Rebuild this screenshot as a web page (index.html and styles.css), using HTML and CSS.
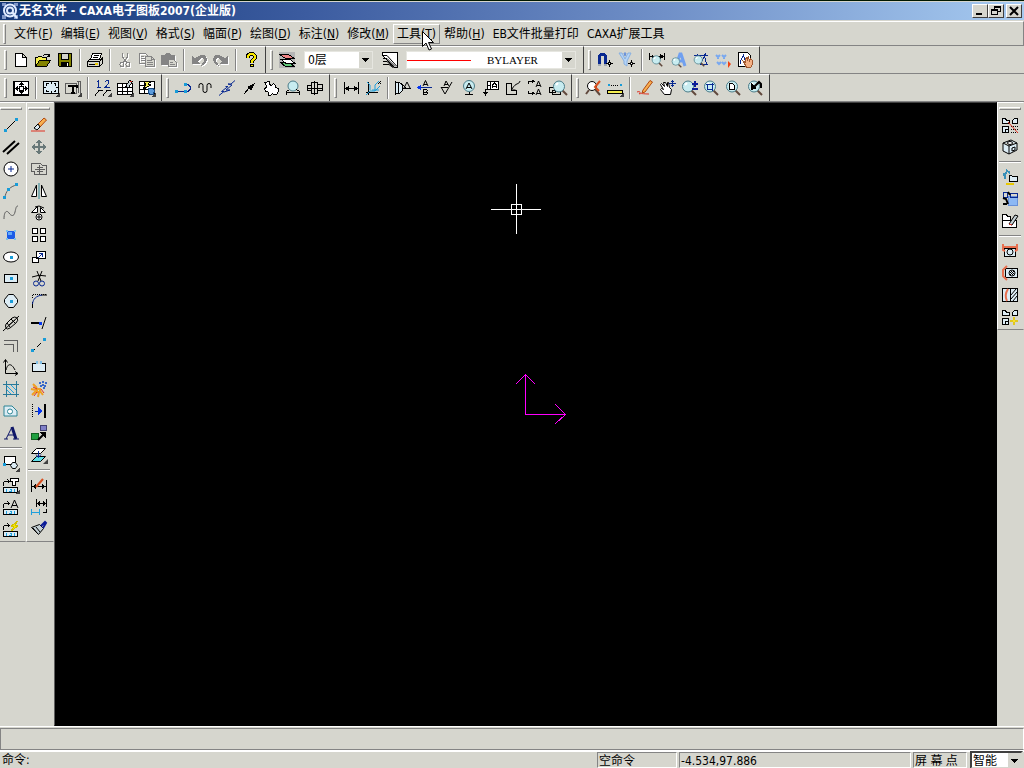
FILE: index.html
```html
<!DOCTYPE html>
<html lang="zh-CN">
<head>
    <meta charset="utf-8">
    <title>无名文件 - CAXA电子图板2007(企业版)</title>
    <link rel="stylesheet" href="styles.css">
</head>
<body>
    <svg class="defs" aria-hidden="true">
        <symbol id="lens" viewBox="0 0 16 16"><path class="handle" d="M10.500 10.500l4.500 4.500"/><circle class="glass" cx="7" cy="6.500" r="5.500"/><path class="shine" d="M4 5l2-2"/></symbol>
        <symbol id="fly" viewBox="0 0 18 18"><path class="flyout" d="M17 12v5h-5z"/></symbol>
        <symbol id="block" viewBox="0 0 16 16"><path d="M.5 4.500h6M4.500 2.500l2 2l-2 2M.5 4.500v4"/><rect class="pale" x=".5" y="10.500" width="14" height="5"/><path class="cyan" d="M3.500 12v3M6.500 12h2v2M11.500 12v3M5.500 14.500h3"/></symbol>
    </svg>

    <header class="titlebar">
        <svg class="logo" viewBox="0 0 16 16"><path class="logo-bg" d="M0 0h4v3H0zM12 0h4v3h-4zM0 12h4v4H0zM12 12h4v4h-4z"/><circle cx="8" cy="7.500" r="6"/><circle cx="8" cy="7.500" r="3"/><path d="M10 9l5 6"/></svg>
        <h1>无名文件 - CAXA电子图板2007(企业版)</h1>
        <div class="window-buttons">
            <button aria-label="最小化"><svg viewBox="0 0 12 10"><path class="thick" d="M2 8h6"/></svg></button>
            <button aria-label="还原"><svg viewBox="0 0 12 10"><path d="M4.500 3V.5h6v5H8M4 1.500h7M1.500 3.500h6v5h-6zM1 4.500h7"/></svg></button>
            <button aria-label="关闭"><svg viewBox="0 0 12 10"><path class="cross" d="M2 1l8 8M10 1l-8 8"/></svg></button>
        </div>
    </header>

    <nav class="menubar">
        <span class="grip"></span>
        <button>文件(<u>F</u>)</button>
        <button>编辑(<u>E</u>)</button>
        <button>视图(<u>V</u>)</button>
        <button>格式(<u>S</u>)</button>
        <button>幅面(<u>P</u>)</button>
        <button>绘图(<u>D</u>)</button>
        <button>标注(<u>N</u>)</button>
        <button>修改(<u>M</u>)</button>
        <button class="hot">工具(<u>T</u>)<svg class="pointer" viewBox="0 0 12 20"><path d="M.5.5v15l3.500-3.500l3 7l2.500-1l-3-6.500h5z"/></svg></button>
        <button>帮助(<u>H</u>)</button>
        <button>EB文件批量打印</button>
        <button>CAXA扩展工具</button>
    </nav>

    <div class="toolrow">
        <div class="toolbar">
            <span class="grip"></span>
            <button aria-label="新建"><svg viewBox="0 0 16 16"><path class="white" d="M2.500 1.500h7l4 4v9h-11zM9.500 1.500v4h4"/></svg></button>
            <button aria-label="打开"><svg viewBox="0 0 16 16"><path class="yellow" d="M.5 14.500v-9h2l1-1h3l1 1h4v3"/><path class="olive" d="M.5 14.500l4-6h11l-4 6z"/><path d="M8.500 3.500l2-1.500h2l2 2M14.500 1.500v3h-3"/></svg></button>
            <button aria-label="保存"><svg viewBox="0 0 16 16"><path class="olive" d="M1.500 1.500h13v13h-12l-1-1z"/><path class="panel" d="M4.500 1.500h7v6h-7z"/><path class="solid" d="M4 10h8v5H4z"/><path class="ink-white" d="M10.500 11v3"/></svg></button>
            <i class="sep"></i>
            <button aria-label="打印"><svg viewBox="0 0 16 16"><path class="white" d="M3.500 7.500l2-6h9l-2 6z"/><path class="panel" d="M.5 9.500l2-2h11l2-2v6l-3 3H.5z"/><path d="M.5 9.500h12v5M12.500 9.500l3-3M6.500 3.500h5M5.500 5.500h5M2 12.500h9M2 14h10"/><path class="yellow-line" d="M8 11.500h3"/></svg></button>
            <i class="sep"></i>
            <button aria-label="剪切"><svg class="off" viewBox="0 0 16 16"><path d="M5.500 1v4l3 4M10.500 1v4l-3 4l-2 2M8.500 9l3 2"/><circle cx="5" cy="12.500" r="2"/><circle cx="11" cy="12.500" r="2"/></svg></button>
            <button aria-label="复制"><svg class="off" viewBox="0 0 16 16"><path d="M.5 1.500h6l2 2v8h-8zM2 4.500h3M2 6.500h4M2 8.500h4"/><path class="panel" d="M6.500 4.500h6l3 3v7h-9z"/><path d="M8 8.500h5M8 10.500h6M8 12.500h6M12.500 4.500v3h3"/></svg></button>
            <button aria-label="粘贴"><svg class="off" viewBox="0 0 16 16"><path class="graybox" d="M.5 3.500h4l1-2h3l1 2h4v9H.5z"/><path class="panel" d="M7.500 7.500h5l3 3v4h-8z"/><path d="M9 10.500h3M9 12.500h5"/></svg></button>
            <i class="sep"></i>
            <button aria-label="撤消"><svg class="off" viewBox="0 0 16 16"><path class="graybox" d="M1.500 4.500v7h7l-2.500-2 4-4h2l1.500 1.500-.5 3-2.500 3.500 4-3 1-4-2-3h-4L4 7z"/></svg></button>
            <button aria-label="重做"><svg class="off" viewBox="0 0 16 16"><path class="graybox" d="M14.500 4.500v7h-7l2.500-2-4-4H4L2.500 7l.5 3 2.500 3.500-4-3-1-4 2-3h4L12 7z"/></svg></button>
            <i class="sep"></i>
            <button aria-label="帮助"><svg viewBox="0 0 16 16"><path class="help-edge" d="M5 6V3.500l2-1.500h3l2 2v2l-3 3v2M8.500 12v3"/><path class="help-fill" d="M5 6V3.500l2-1.500h3l2 2v2l-3 3v2M8.500 13v1"/></svg></button>
        </div>
        <div class="toolbar">
            <span class="grip"></span>
            <button class="pressed" aria-label="层控制"><svg viewBox="0 0 16 16"><path class="green" d="M1.500 10.500h9l5 4h-9z"/><path class="white" d="M1.500 7h9l5 4h-9z"/><path class="pink" d="M.5 2.500h9l6 4h-9z"/></svg></button>
            <label class="combo layer"><select aria-label="图层"><option>0层</option></select><svg class="arrow" viewBox="0 0 13 16"><path d="M3 6h7L6.500 10z"/></svg></label>
            <button aria-label="线型"><svg viewBox="0 0 16 16"><path class="white" d="M.5.500h15v15h-3L.5 3.500z"/><path class="smooth" d="M1 3.500h4l10 11M1 6.500h4l8 8M1 9.500h4l7 6M1 12.500h6l4 3"/></svg></button>
            <label class="combo linetype"><select aria-label="线型选择"><option>BYLAYER</option></select><svg class="sample" viewBox="0 0 64 1"><path d="M0 .5h64"/></svg><svg class="arrow" viewBox="0 0 13 16"><path d="M3 6h7L6.500 10z"/></svg></label>
        </div>
        <div class="toolbar">
            <span class="grip"></span>
            <button aria-label="捕捉设置"><svg viewBox="0 0 16 16"><path class="magnet" d="M2.500 13V4l2-2h2l2 2v9"/><path class="silver" d="M1 13h3M7 13h3"/><path d="M12.500 8v7M9 11.500h7"/><path class="white" d="M11.500 10.500h2v2h-2z"/></svg></button>
            <button aria-label="拾取过滤"><svg class="smooth" viewBox="0 0 16 16"><path class="funnel" d="M0 1h3l3 6 3-6h3L8 9v5l-3-2V9z"/><path class="sky" d="M5 1h2l-1 3z"/><path d="M12.500 8v7M9 11.500h7"/><path class="white" d="M11.500 10.500h2v2h-2z"/></svg></button>
            <i class="sep"></i>
            <button aria-label="查询距离"><svg viewBox="0 0 16 16"><path d="M.5 1v7M15.500 1v7M1 4.500h14"/><path class="solid" d="M15 4.500l-4-3v6zM1 4.500l3-2v4z"/><use href="#lens" x="2" y="3" width="12" height="12"/></svg></button>
            <button aria-label="查询文字"><svg class="smooth" viewBox="0 0 16 16"><path class="letter-sky" d="M6 11L9 2h1l4 12M7 9h6"/><use href="#lens" y="5" width="11" height="11"/></svg></button>
            <button aria-label="查询面积"><svg viewBox="0 0 16 16"><path class="blue" d="M1 3.500h14M4.500 1.500v4M12.500 1.500l-5 11h7M11.500 4l2 8"/><use href="#lens" y="3" width="12" height="12"/></svg></button>
            <button aria-label="查询坐标"><svg class="smooth" viewBox="0 0 16 16"><path class="marks" d="M1 3l2 2 2-2M7 3l2 2 2-2M2 10l2 2 2-2M7 10l2 2 2-2M3 6v1M9 6v1"/><path class="red-solid" d="M13 9l3 3-3 4z"/></svg></button>
            <button aria-label="查询属性"><svg viewBox="0 0 16 16"><path class="white" d="M1.500.500h9l3 3v11h-12z"/><path class="blue" d="M3.500 12V9l3-6 2 7"/><path class="hand" d="M6.500 9.500l2 1v-4l2-1v3l1-3 1 3 1-2 2 2v4l-2 3h-4z"/></svg></button>
        </div>
    </div>

    <div class="toolrow">
        <div class="toolbar">
            <span class="grip"></span>
            <button aria-label="显示全部"><svg viewBox="0 0 16 16"><path class="white" d="M1.500 1.500h14v13h-14z"/><path d="M.5 1v14.500H16M8.500 3v3M8.500 10v3M3 8.500h3M11 8.500h3M6.500 6.500h4v4h-4z"/><path class="solid" d="M8.500 2L11 5H6zM8.500 14l2.500-3H6zM2 8.500L5 6v5zM15 8.500L12 6v5z"/></svg></button>
            <i class="sep"></i>
            <button aria-label="图幅"><svg viewBox="0 0 16 16"><path class="pale" d="M.5 1.500h15v12H.5z"/><path d="M3.500 5.500v-2h2M10.500 3.500h2v2M3.500 9.500v2h2M12.500 9.500v2h-2M8 1v3M8 11v3M0 7.500h3M13 7.500h3"/><use href="#fly" width="18" height="18"/></svg></button>
            <button aria-label="标题栏"><svg viewBox="0 0 16 16"><path class="gray" d="M.5 3.500h11v10H.5zM12 1.500h3.500v12M13.500 1v12"/><path class="heavy" d="M4 7V6h8v2M8 6v7M6 13h4"/><use href="#fly" width="18" height="18"/></svg></button>
            <i class="sep"></i>
            <button aria-label="序号"><svg viewBox="0 0 16 16"><path class="blue" d="M3.500 7V.5L2 2M2 7.500h4M10 2l1.500-1.500h2v3L10 7.500h5"/><path d="M0 15.500l4-5h4M8 15.500l4-5h4"/><use href="#fly" width="18" height="18"/></svg></button>
            <button aria-label="明细表"><svg viewBox="0 0 16 16"><path class="white" d="M.5 3.500h15v11H.5z"/><path d="M.5 7.500h15M.5 11h15M5.500 3.500v11M10.500 3.500v11"/><path class="silver-fill" d="M8.500 6.500l4-6 3 1-4 6z"/><path class="red" d="M13 1l2 1"/><use href="#fly" width="18" height="18"/></svg></button>
            <button aria-label="背景"><svg viewBox="0 0 16 16"><path class="white" d="M.5 1.500h15v12H.5z"/><path d="M.5 5.500h5M.5 9.500h8M5.500 1v12"/><path class="yellow" d="M12 1.500H4.500L7 5l-4 5 9-5-3-1z"/><path class="globe" d="M9.500 8.500h5l1 2-1 4h-4l-1-2z"/><use href="#fly" width="18" height="18"/></svg></button>
        </div>
        <div class="toolbar">
            <span class="grip"></span>
            <button aria-label="轮廓线"><svg viewBox="0 0 16 16"><path class="blue" d="M1 11.500h9M10 4.500h3l2 2v3l-2 2h-3"/><path class="dots" d="M0 10h3v3H0zM9 10h3v3H9zM9 3h3v3H9z"/></svg></button>
            <button aria-label="波浪线"><svg class="smooth" viewBox="0 0 16 16"><path d="M2 8V5.500a2 2 0 0 1 4 0v5a2 2 0 0 0 4 0v-5a2 2 0 0 1 4 0V8"/></svg></button>
            <button aria-label="双折线"><svg class="smooth" viewBox="0 0 16 16"><path class="blue" d="M0 15.500l5-4H2.500L9 6.500M9 6.500H6.500M16 .5l-4 3.500H9l4 1-6 5h4l-6 2"/></svg></button>
            <button aria-label="箭头"><svg viewBox="0 0 16 16"><path d="M3 14l6-7"/><path class="solid" d="M14 3L6 7l4 4z"/></svg></button>
            <button aria-label="齿轮"><svg viewBox="0 0 16 16"><path class="white" d="M1.500 2.500h2l1-1h2v3l2 1 2-2 2 2v2l3 1v3l-2 3h-3l-1-1-2 2h-2v-3l-1-1h-2l-1-3 2-1v-2z"/></svg></button>
            <button aria-label="局部放大"><svg viewBox="0 0 16 16"><circle class="glass" cx="8" cy="6" r="5"/><path d="M1.500 14.500v-3l3-2M14.500 14.500v-3l-3-2M2 12.500h12"/></svg></button>
            <button aria-label="孔轴"><svg viewBox="0 0 16 16"><path d="M.5 5.500h4v5h-4zM10.500 4.500h5v6h-5zM4.500 2.500h6v11h-6zM7.500 1v14M0 8.500h16"/></svg></button>
        </div>
        <div class="toolbar">
            <span class="grip"></span>
            <button aria-label="尺寸标注"><svg viewBox="0 0 16 16"><path d="M1.500 2v12M15.500 2v12M2 8.500h13"/><path class="solid" d="M2 8.500l4-3v6zM15 8.500l-4-3v6z"/></svg></button>
            <button aria-label="坐标标注"><svg class="smooth" viewBox="0 0 16 16"><path d="M3.500 2v13M1 12.500h12M13 1l3 3M16 1l-3 3"/><path class="cyan" d="M1 15l4-4h5l5-5M5 10V5L2 2M10 11V5l4-4M7 10h7"/></svg></button>
            <i class="sep"></i>
            <button aria-label="倒角标注"><svg viewBox="0 0 16 16"><path class="pale" d="M.5 2.500h4l3 3v5l-3 3h-4z"/><path d="M.5 1v14M3.500 2v12M8 8.500h8"/><path class="smooth" d="M9 8l3-6 3 6M6 3l5 5"/></svg></button>
            <button aria-label="引出说明"><svg viewBox="0 0 16 16"><path class="smooth" d="M6 6l2.500-5.500L11 6M7 4.500h3"/><path d="M6.500 9.500h3l1 1-1 1.500h-3zM6.500 12h3l1 1-1 1.500h-3z"/><path class="blue" d="M1 7.500h14"/><path class="blue-fill" d="M0 7.500l4-3v6z"/></svg></button>
            <button aria-label="粗糙度"><svg class="smooth" viewBox="0 0 16 16"><path d="M2 7l4 7 7-12M2 7.500h7M5 6l2-5 3 5M6 4.500h3"/></svg></button>
            <button aria-label="基准代号"><svg viewBox="0 0 16 16"><circle class="glass" cx="8" cy="6" r="5.500"/><path class="smooth" d="M5 9l3-6 3 6M6 7.500h4"/><path d="M8 12v3M4 14.500h8"/></svg></button>
            <button aria-label="形位公差"><svg viewBox="0 0 16 16"><path class="white" d="M4.500 1.500h11v8h-11z"/><path d="M7.500 2v7M4.500 5.500h3M9.500 8V5l2-2 2 2v3M9.500 6.500h4M4.500 9.500h-2v5"/><path class="solid" d="M0 12h5l-2.500 4z"/></svg></button>
            <button aria-label="焊接符号"><svg viewBox="0 0 16 16"><path d="M1.500 3v11.500h10v-4h-5V3z"/><path class="smooth" d="M15 1c-1 4-4 1-8 8M6.500 6v4h4"/></svg></button>
            <button aria-label="剖切符号"><svg viewBox="0 0 16 16"><path d="M1.500 4V1.500h5M5 0l2 1.500L5 3M1.500 11v2.500h5M5 12l2 1.500L5 15"/><path class="smooth" d="M9 7l2.500-6L14 7M10 5.500h3M9 15l2.500-6 2.500 6M10 13.500h3"/></svg></button>
            <button aria-label="标注编辑"><svg viewBox="0 0 16 16"><path d="M.5 7.500h6v5h-6zM3 10.500h8v4H3z"/><use href="#lens" x="3"/></svg></button>
        </div>
        <div class="toolbar">
            <span class="grip"></span>
            <button aria-label="重生成"><svg class="smooth" viewBox="0 0 16 16"><circle class="white" cx="7" cy="6" r="4.500"/><path class="handle" d="M4 10l-3 4M10 9l5 6"/><path class="orange" d="M15 1l-5 6 4 4"/></svg></button>
            <button aria-label="距离"><svg viewBox="0 0 16 16"><path class="dots" d="M1 4h2v2H1zM13 4h2v2h-2z"/><path class="dash" d="M4 5.500h8"/><path class="yellow" d="M.5 10.500h15v3H.5z"/><use href="#fly" width="18" height="18"/></svg></button>
            <i class="sep"></i>
            <button aria-label="重画"><svg class="smooth" viewBox="0 0 16 16"><path class="orange-fill" d="M6 10L13 .5l2.500 1.500L8 12l-3 1z"/><path class="red" d="M0 12c3-1 4 0 2 2 2-1 4 0 10 0"/></svg></button>
            <button aria-label="平移"><svg viewBox="0 0 16 16"><path class="white smooth" d="M5.500 14.500l-4-5 1-1 2 1-3-5 1-1 3 3-1-4h2l2 4v-4h1l1 5 2 2-1 5z"/><path class="blue" d="M13.500 0v7M10 3.500h7M12 1.500h3M12 5.500h3"/></svg></button>
            <button aria-label="动态缩放"><svg viewBox="0 0 16 16"><use href="#lens"/><path class="navy-heavy" d="M11 4h6M14 1v6M11 9h6"/></svg></button>
            <button aria-label="窗口缩放"><svg viewBox="0 0 16 16"><use href="#lens"/><path class="blue" d="M4.500 4.500h5v5h-5zM3 4.500h8M9.500 3v8"/></svg></button>
            <button aria-label="全部显示"><svg viewBox="0 0 16 16"><use href="#lens"/><path class="white" d="M4.500 3.500h3l2 2v4h-5z"/></svg></button>
            <button aria-label="显示上一步"><svg viewBox="0 0 16 16"><use href="#lens"/><path class="solid" d="M4 3v7l6-2z"/><path class="heavy smooth" d="M6 8l6-6 2 2v4"/></svg></button>
        </div>
    </div>

    <main class="workspace">
        <aside class="dock">
            <div class="column first">
                <span class="grip"></span>
                <button aria-label="直线"><svg viewBox="0 0 16 16"><path class="smooth" d="M2 14L14 2"/><path class="dots" d="M1 12h3v3H1zM12 1h3v3h-3z"/></svg></button>
                <button aria-label="平行线"><svg class="smooth" viewBox="0 0 16 16"><path class="slant" d="M0 13L12 2M4 15L16 4"/></svg></button>
                <button aria-label="圆"><svg class="smooth" viewBox="0 0 16 16"><circle class="white" cx="8" cy="8" r="7"/><path class="blue" d="M8 5v6M5 8h6"/></svg></button>
                <button aria-label="圆弧"><svg viewBox="0 0 16 16"><path class="gray smooth" d="M2 15c0-6 5-12 12-13"/><path class="dots" d="M0 13h3v3H0zM4 5h3v3H4zM12 0h3v3h-3z"/></svg></button>
                <button aria-label="样条"><svg class="smooth" viewBox="0 0 16 16"><path class="gray" d="M1 14c0-8 3-9 5-6s5 4 6-1c1-4 1-6 3-6"/></svg></button>
                <button aria-label="点"><svg viewBox="0 0 16 16"><path class="point" d="M4 4h8v8H4z"/><path class="point-lit" d="M5 5h4v3H5z"/><path class="dots-light" d="M3 3h2v2H3zM11 3h2v2h-2zM3 11h2v2H3zM11 11h2v2h-2z"/></svg></button>
                <button aria-label="椭圆"><svg class="smooth" viewBox="0 0 16 16"><ellipse class="white" cx="8" cy="8" rx="7.500" ry="5"/><path class="dots" d="M7 7h3v3H7z"/></svg></button>
                <button aria-label="矩形"><svg viewBox="0 0 16 16"><path class="pale" d="M1.500 3.500h13v8h-13z"/><path class="dots" d="M7 6h3v3H7z"/></svg></button>
                <button aria-label="正多边形"><svg class="smooth" viewBox="0 0 16 16"><path class="pale" d="M5.500 1.500h5l4 5v3l-4 5h-5l-4-5v-3z"/><path class="dots" d="M7 7h3v3H7z"/></svg></button>
                <button aria-label="中心线"><svg class="smooth" viewBox="0 0 16 16"><path d="M3 9l6-6q3-2 5 0t-1 5l-6 5q-3 2-4 0t0-4M0 16L16 1M6 10l6-5M4 8l3 4M8 4l4 4"/></svg></button>
                <button aria-label="等距线"><svg viewBox="0 0 16 16"><path class="gray" d="M1 3.500h13.500V15M1 7.500h9.500V15"/></svg></button>
                <button aria-label="公式曲线"><svg viewBox="0 0 16 16"><path class="smooth" d="M2.500 1v13.500H15M.5 3.500l2-3 2 3M12 12.500l3 2-3 2M3 11c2-8 6-6 9 0"/></svg></button>
                <button aria-label="剖面线"><svg viewBox="0 0 16 16"><path class="teal" d="M3 0v16M13 0v16M0 3h16M0 13h16"/><path class="cyan smooth" d="M4 5l7 7M4 9l4 4M8 4l5 5"/></svg></button>
                <button aria-label="局部填充"><svg class="smooth" viewBox="0 0 16 16"><path class="pale teal-line" d="M1 3h8l5 5v5H1z"/><circle class="white teal-line" cx="7" cy="8.500" r="2.500"/></svg></button>
                <button aria-label="文字"><svg class="smooth" viewBox="0 0 16 16"><path class="type" d="M9 2l4 12"/><path class="type-thin" d="M3 14L9 2M5 10h7M1 14h4M10 14h6"/></svg></button>
                <i class="sep"></i>
                <button aria-label="块创建"><svg viewBox="0 0 16 16"><path class="white" d="M1.500 1.500h11v8h-11z"/><path class="pale smooth" d="M9.500 7.500h3l2 3-2 3h-3l-2-3z"/><path class="dots" d="M0 8h3v3H0z"/><use href="#fly" width="18" height="18"/></svg></button>
                <button aria-label="图符"><svg viewBox="0 0 16 16"><use href="#block"/><path class="white" d="M7.500 1.500h8v3h-3v4h-3v-4h-2z"/><use href="#fly" width="18" height="18"/></svg></button>
                <button aria-label="图符文字"><svg viewBox="0 0 16 16"><use href="#block"/><path class="smooth" d="M8 9l3.500-8L15 9M9 6.500h5"/></svg></button>
                <button aria-label="图符驱动"><svg viewBox="0 0 16 16"><use href="#block"/><path class="bolt" d="M15 0L8 5l3 1-3 4 7-5-3-1z"/></svg></button>
            </div>
            <div class="column second">
                <span class="grip"></span>
                <button aria-label="删除"><svg class="smooth" viewBox="0 0 16 16"><path class="orange-fill" d="M7 7l6-6 2.500 2L9 10z"/><path class="pale" d="M7 7l2 3-3 3-3-2z"/><path class="red" d="M0 14h14"/></svg></button>
                <button aria-label="平移图形"><svg viewBox="0 0 16 16"><path class="move" d="M8 1v14M1 8h14"/><path class="gray-solid" d="M8 0l3 4H5zM8 16l3-4H5zM0 8l4-3v6zM16 8l-4-3v6z"/></svg></button>
                <button aria-label="复制图形"><svg viewBox="0 0 16 16"><path class="gray panel" d="M.5 2.500h9l2 2h4v9h-12v-3h-3z"/><path class="gray" d="M4 8.500h10M8.500 4v10M6 6.500h6M6 10.500h6"/></svg></button>
                <button aria-label="镜像"><svg class="smooth" viewBox="0 0 16 16"><path class="white" d="M5.500 2v11.500h-5zM10.500 2v11.500h5z"/><path class="teal-line" d="M8 0v16"/></svg></button>
                <button aria-label="旋转"><svg class="smooth" viewBox="0 0 16 16"><path class="white" d="M6.500 1.500v6h-6zM9.500 2.500l5 5h-5z"/><circle class="white" cx="8" cy="12" r="3"/><path d="M8 10v4M6 12h4M4 2l4-1 5 2"/></svg></button>
                <button aria-label="阵列"><svg viewBox="0 0 16 16"><path class="white" d="M1.500 1.500h5v5h-5zM9.500 1.500h5v5h-5zM1.500 9.500h5v5h-5zM9.500 9.500h5v5h-5z"/></svg></button>
                <button aria-label="比例缩放"><svg viewBox="0 0 16 16"><path class="white" d="M5.500 2.500h9v7h-9zM1.500 8.500h6v5h-6z"/><path class="blue" d="M7 9l4-4M8 4.500h3v3"/></svg></button>
                <button aria-label="裁剪"><svg class="smooth" viewBox="0 0 16 16"><path d="M1 6q7-3 14-1M6 0l4 10M11 0L7 10"/><circle class="blue" cx="5" cy="12.500" r="2.500"/><circle class="blue" cx="11" cy="12.500" r="2.500"/></svg></button>
                <button aria-label="过渡"><svg class="smooth" viewBox="0 0 16 16"><path class="dash" d="M1.500 5V1.500H15"/><path d="M1.500 15V9M10 2h6"/><path class="blue" d="M1.500 11C2 6 5 3 11 2"/></svg></button>
                <button aria-label="齐边"><svg viewBox="0 0 16 16"><path class="heavy" d="M0 8h8"/><path class="blue-fill" d="M8 7h3v3H8z"/><path class="smooth" d="M11 14l4-12"/></svg></button>
                <button aria-label="拉伸"><svg viewBox="0 0 16 16"><path class="smooth" d="M2 14l2-2M6 10l4-4M12 4l2-2"/><path class="dots" d="M0 12h3v3H0zM12 1h3v3h-3z"/></svg></button>
                <button aria-label="打断"><svg viewBox="0 0 16 16"><path class="pale" d="M6.500 4.500h-5v8h13v-8h-5"/><path class="dots-light" d="M5 2h2v3H5zM9 2h2v3H9z"/></svg></button>
                <button aria-label="打散"><svg class="smooth" viewBox="0 0 16 16"><path class="burst" d="M2 3l4 4M0 8l5 1M1 14l4-4M7 16l1-5M12 14l-3-4M6 8h3v3H6z"/><path class="red" d="M2 6l4 2M3 15l3-4M10 8l3 4"/><path class="spots" d="M9 5h2M13 5h2M11 1h2M8 2h2M14 2h2M12 7h2M11 4h2"/></svg></button>
                <button aria-label="移动到"><svg viewBox="0 0 16 16"><path class="dash" d="M1.500 1v14"/><path class="heavy" d="M14 1v14"/><path class="blue" d="M4 8h7"/><path class="blue-fill" d="M7 4l5 4-5 4z"/></svg></button>
                <button aria-label="格式刷"><svg viewBox="0 0 16 16"><path class="green-fill" d="M0 8h7v6H0z"/><path class="violet" d="M9 0h6v5H9z"/><path class="heavy smooth" d="M7 15l6-6"/><path class="solid" d="M8 7h7v7z"/></svg></button>
                <button aria-label="图层移动"><svg class="smooth" viewBox="0 0 16 16"><path class="white" d="M5.500 1.500h9l-5 5h-9z"/><path class="aqua" d="M5.500 9.500h9l-5 5h-9z"/><path class="blue" d="M7.500 4v6M5 7.500l2.500 3 2.500-3"/><use href="#fly" width="18" height="18"/></svg></button>
                <i class="sep"></i>
                <button aria-label="标注修改"><svg viewBox="0 0 16 16"><path d="M.5 3v12M15.500 3v12M1 9.500h14"/><path class="solid" d="M1 9.500L5 7v5zM15 9.500L11 7v5z"/><path class="orange smooth" d="M5 10l7-8"/></svg></button>
                <button aria-label="尺寸驱动"><svg viewBox="0 0 16 16"><path d="M5.500 0v8M15.500 0v8M6 4.500h9M15.500 10v3h-4"/><path class="solid" d="M6 4.500L9 2v5zM15 4.500L12 2v5z"/><path class="cyan" d="M.5 10v6M8.500 10v6M1 13.500h7"/></svg></button>
                <button aria-label="特性匹配"><svg class="smooth" viewBox="0 0 16 16"><path class="silver-fill" d="M.5 6.500l8-3 4 4-5 6z"/><path d="M2 7l5 6M5 6l4 5"/><path class="navy-heavy" d="M10 5l4-4 1 1-3 5"/></svg></button>
            </div>
        </aside>

        <section class="canvas">
            <svg class="crosshair" viewBox="0 0 50 50"><path d="M25.500 0v50M0 25.500h50M20.500 20.500h10v10h-10z"/></svg>
            <svg class="axes" viewBox="0 0 52 50"><path d="M10.500 0v40.500h40M.5 10.500l10-10l10 10M40.500 30.500l10 10l-10 9"/></svg>
        </section>

        <aside class="dock">
            <div class="column">
                <span class="grip"></span>
                <button aria-label="提取图符"><svg viewBox="0 0 16 16"><path class="pale" d="M.5 1.500h3l1 2h3v3h-7zM10.500 6.500v-3l2-2h3v5zM.5 9.500h6v6h-6z"/><path d="M3.500 15v-3h3"/><path class="dash" d="M9 9.500h7M9 12.500h7M9 15.500h7"/><path class="red smooth" d="M6 5l10 11"/></svg></button>
                <button aria-label="定义图符"><svg class="smooth" viewBox="0 0 16 16"><path class="pale" d="M1 4l8-3 6 3v7l-8 4-6-3zM1 4l6 3 8-3M7 7v8"/><ellipse class="white" cx="8" cy="4" rx="2.500" ry="1.500"/><path d="M10 9l3-1v3l-3 1z"/></svg></button>
                <i class="sep"></i>
                <button aria-label="技术要求"><svg viewBox="0 0 16 16"><path class="steel" d="M5 3L1 6M4 1l4 3M3 5v5"/><path class="pale" d="M7.500 6.500h2l1 1h5v5h-8z"/><path class="yellow-line" d="M4 15h8"/></svg></button>
                <button aria-label="构件库"><svg viewBox="0 0 16 16"><path class="sky" d="M6.500 5.500h9v9h-9z"/><path class="blue" d="M8 2.500h7v4H8zM1.500 1.500h4v5h-4z"/><path class="heavy smooth" d="M1 7l3 1 2 5M1 13h4M6 1l2 3"/></svg></button>
                <button aria-label="图库编辑"><svg viewBox="0 0 16 16"><path class="white" d="M.5 1.500h4l1 2h3v4h-8zM.5 7.500h14v7H.5z"/><path class="silver-fill smooth" d="M7 11l6-9 3 1-6 9z"/><path class="red smooth" d="M7 11l3 1"/></svg></button>
                <i class="sep"></i>
                <button aria-label="尺寸检查"><svg viewBox="0 0 16 16"><path class="pale" d="M2.500 5.500h11v8h-11z"/><circle class="smooth" cx="8" cy="9" r="3"/><path class="salmon smooth" d="M1 1v6l2 1M15 1v6l-2 1M2 4h12"/></svg></button>
                <button aria-label="局部剖"><svg viewBox="0 0 16 16"><path class="pale" d="M3.500 3.500h12v9h-12z"/><g class="smooth"><circle cx="10" cy="8" r="3"/><path d="M8 10l4-4M8 8l2-2M10 10l2-2"/><path class="salmon" d="M5 1L1 5v6l4 4"/></g></svg></button>
                <button aria-label="剖视"><svg viewBox="0 0 16 16"><path class="pale" d="M.5 1.500h15v13H.5z"/><path class="salmon smooth" d="M6 2q-4 6-1 12"/><path class="smooth" d="M8.500 2v12M9 8l5-6M9 12l6-7M11 14l4-5"/></svg></button>
                <button aria-label="图库驱动"><svg viewBox="0 0 16 16"><path class="pale" d="M.5 1.500h3l1 2h3v3h-7zM10.500 6.500v-3l2-2h3v5zM.5 9.500h6v6h-6z"/><path d="M3.500 15v-3h3"/><path class="spark" d="M12 8l1 3 3 1-3 1-1 3-1-3-3-1 3-1z"/></svg></button>
            </div>
        </aside>
    </main>

    <div class="prompt"></div>
    <footer class="status">
        <label class="command" for="command">命令:</label>
        <input id="command" type="text">
        <span class="cell state">空命令</span>
        <span class="cell coords">-4.534,97.886</span>
        <span class="cell snap">屏 幕 点</span>
        <label class="combo snapmode"><select aria-label="捕捉方式"><option>智能</option></select><svg class="arrow" viewBox="0 0 13 16"><path d="M3 6h7L6.500 10z"/></svg></label>
    </footer>
</body>
</html>
```
FILE: styles.css
```css
* {
    box-sizing: border-box;
}
body {
    margin: 0;
    height: 100vh;
    display: flex;
    flex-direction: column;
    overflow: hidden;
    border-top: 1px solid #001800;
    background: #d6d6ce;
    color: #000;
    font: 12px/16px "DejaVu Sans Condensed", "Noto Sans CJK SC", sans-serif;
}
button {
    padding: 0;
    border: 0;
    background: none;
    color: inherit;
    font: inherit;
}
.defs {
    position: absolute;
    width: 0;
    height: 0;
}

/* title bar */
.titlebar {
    flex: none;
    display: flex;
    align-items: center;
    height: 18px;
    margin: 1px 0;
    padding: 0 2px;
    background: linear-gradient(90deg, #143878, #3c5ca0 30%, #7090c8 65%, #a6caf0);
}
.titlebar h1 {
    flex: 1;
    margin: 0;
    padding-left: 1px;
    color: #fff;
    font-size: 12px;
    font-weight: bold;
}
.logo {
    width: 16px;
    height: 16px;
    fill: none;
    stroke: #e0ecff;
    stroke-width: 2;
}
.logo .logo-bg {
    fill: #8098c8;
    stroke: none;
}
.window-buttons {
    display: flex;
}
.window-buttons button {
    width: 16px;
    height: 14px;
    border: 1px solid;
    border-color: #fff #404040 #404040 #fff;
    background: #d6d6ce;
}
.window-buttons button:last-child {
    margin-left: 2px;
}
.window-buttons svg {
    display: block;
    width: 12px;
    height: 10px;
    margin: 1px;
    fill: none;
    stroke: #000;
    shape-rendering: crispEdges;
}
.window-buttons .thick {
    stroke-width: 2;
}
.window-buttons .cross {
    stroke-width: 2;
    shape-rendering: auto;
}

/* menu */
.menubar {
    flex: none;
    display: flex;
    align-items: center;
    height: 25px;
    padding-left: 3px;
    border: 1px solid #848484;
    border-width: 0 1px 1px 0;
    border-top: 1px solid #fff;
}
.menubar button {
    height: 20px;
    padding: 0 3px;
    border: 1px solid transparent;
    white-space: nowrap;
}
.menubar .grip {
    margin-right: 4px;
}
.menubar .hot {
    position: relative;
    border-color: #fff #848484 #848484 #fff;
}
.pointer {
    position: absolute;
    left: 28px;
    top: 6px;
    width: 12px;
    height: 20px;
    fill: #fff;
    stroke: #000;
    z-index: 2;
}
u {
    text-underline-offset: 1px;
}

/* toolbars */
.toolrow {
    flex: none;
    display: flex;
    height: 28px;
    border-bottom: 1px solid #848484;
}
.toolbar {
    display: flex;
    align-items: center;
    padding: 0 3px 0 4px;
    border-top: 1px solid #fff;
    border-right: 1px solid #404040;
}
.grip {
    flex: none;
    width: 3px;
    height: 20px;
    margin-right: 3px;
    border: 1px solid;
    border-color: #fff #848484 #848484 #fff;
}
.toolbar button,
.column button {
    flex: none;
    display: grid;
    place-items: center;
    width: 22px;
    height: 22px;
}
.toolbar .pressed svg {
    background: #b5b5b5;
}
.sep {
    flex: none;
    width: 2px;
    height: 22px;
    margin: 0 3px;
    border-left: 1px solid #848484;
    border-right: 1px solid #fff;
}

/* drop-downs: field and arrow share one grid cell */
.combo {
    display: grid;
    align-items: center;
    height: 18px;
    background: #fff;
    border: 1px solid #e6e6e0;
}
.combo > * {
    grid-area: 1 / 1;
}
.combo select {
    width: 100%;
    height: 16px;
    padding: 0 3px;
    border: 0;
    background: none;
    color: #000;
    font: inherit;
    appearance: none;
}
.combo .arrow {
    justify-self: end;
    width: 13px;
    height: 16px;
    background: #d6d6ce;
    pointer-events: none;
    shape-rendering: crispEdges;
}
.layer {
    width: 69px;
    margin: 0 6px;
}
.linetype {
    width: 170px;
    margin: 0 4px 0 5px;
}
.linetype select {
    padding-left: 80px;
    font: 11px/16px "Liberation Serif", serif;
}
.sample {
    width: 64px;
    height: 1px;
    stroke: #f00;
    pointer-events: none;
}

/* icons */
.toolbar button svg,
.column button svg {
    width: 16px;
    height: 16px;
    overflow: visible;
    fill: none;
    stroke: #000;
    shape-rendering: crispEdges;
}
.toolbar button .smooth,
.column button .smooth {
    shape-rendering: auto;
}
.toolbar button .off {
    stroke: #848484;
    filter: drop-shadow(1px 1px 0 #fff);
}
.white { fill: #fff; }
.pale { fill: #dcecf4; }
.panel { fill: #d6d6ce; }
.yellow { fill: #f4ee50; }
.olive { fill: #848400; }
.pink { fill: #f08484; }
.green { fill: #60c878; }
.aqua { fill: #60e0e8; }
.hand { fill: #f4b084; stroke: #a05830; }
.sky { fill: #8cb8f4; stroke: #6890d8; }
.funnel { fill: #b4d4f8; stroke: #88b0e0; }
.globe { fill: #5c9cdc; stroke: #184880; }
.silver-fill { fill: #c4d0d4; }
.solid { fill: #000; stroke: none; }
.flyout { fill: #404040; stroke: none; }
.graybox { fill: #848484; }
.gray-solid { fill: #687878; stroke: none; }
.red-solid { fill: #f04010; stroke: none; }
.blue-fill { fill: #0838f0; stroke: none; }
.point { fill: #1c5ce8; stroke: none; }
.point-lit { fill: #60a8f8; stroke: none; }
.green-fill { fill: #20a040; stroke: #106020; }
.orange-fill { fill: #f8b050; stroke: #b04810; }
.violet { fill: #8080c8; stroke: #404070; }
.bolt { fill: #f8e800; stroke: #d0c000; }
.dots { fill: #189cd8; stroke: none; }
.dots-light { fill: #80c0e8; stroke: none; }
.blue { stroke: #082890; }
.cyan { stroke: #20a0dc; }
.teal { stroke: #287898; }
.teal-line { stroke: #2c8494; }
.steel { stroke: #3890b8; stroke-width: 2; }
.red { stroke: #e03020; }
.gray { stroke: #5c5c5c; }
.ink-white { stroke: #fff; }
.yellow-line { stroke: #e8c800; stroke-width: 2; }
.orange { stroke: #d85020; stroke-width: 2; }
.salmon { stroke: #e87050; stroke-width: 2; }
.spots { stroke: #3868c8; stroke-width: 2; }
.magnet { stroke: #082890; stroke-width: 3; }
.silver { stroke: #a0a8b0; stroke-width: 2; }
.letter-sky { stroke: #70a0f0; stroke-width: 3; }
.marks { stroke: #78a8f0; stroke-width: 2; }
.heavy { stroke-width: 2; }
.slant { stroke-width: 2; }
.navy-heavy { stroke: #0c1c98; stroke-width: 2; }
.move { stroke: #687878; stroke-width: 2; }
.type { stroke: #101868; stroke-width: 3; }
.type-thin { stroke: #101868; }
.burst { stroke: #f0a020; stroke-width: 2; }
.spark { fill: #f8e030; stroke: #e0c820; }
.dash { stroke-dasharray: 1 1; }
.help-edge { stroke: #000; stroke-width: 4; }
.help-fill { stroke: #f8e800; stroke-width: 2; }
.glass { fill: #c8ecf0; stroke: #4c7c88; shape-rendering: auto; }
.shine { stroke: #fff; stroke-width: 2; shape-rendering: auto; }
.handle { stroke: #60483c; stroke-width: 2; shape-rendering: auto; }

/* drawing area */
.workspace {
    flex: 1;
    min-height: 0;
    display: flex;
    border-bottom: 1px solid #fff;
}
.dock {
    display: flex;
    align-items: flex-start;
}
.column {
    display: flex;
    flex-direction: column;
    align-items: center;
    padding: 4px 2px 1px 1px;
    border: 1px solid;
    border-color: #fff transparent #848484 #fff;
}
.column.first {
    padding: 4px 3px 1px 0;
    border-left: 0;
}
.column.second {
    padding-right: 3px;
}
.column .grip {
    width: 22px;
    height: 3px;
    margin: 0 0 4px;
}
.column .sep {
    width: 22px;
    height: 2px;
    margin: 3px 0;
    border: 1px solid;
    border-color: #848484 transparent #fff;
    border-width: 1px 0;
}
.canvas {
    flex: 1;
    position: relative;
    border: 1px solid;
    border-color: #404040 #000 #000 #606060;
    background: #000;
}
.canvas svg {
    position: absolute;
    fill: none;
    shape-rendering: crispEdges;
}
.crosshair {
    left: 436px;
    top: 81px;
    width: 50px;
    height: 50px;
    stroke: #fff;
}
.axes {
    left: 460px;
    top: 271px;
    width: 52px;
    height: 50px;
    stroke: #f0f;
}

/* prompt and status */
.prompt {
    flex: none;
    height: 22px;
    margin-top: 1px;
    border: 1px solid;
    border-color: #848484 #fff #848484 #848484;
}
.status {
    flex: none;
    display: flex;
    align-items: center;
    height: 18px;
    padding: 0 1px 0 2px;
    border-top: 2px solid #fff;
}
.status input {
    flex: 1;
    min-width: 0;
    height: 16px;
    padding: 0;
    border: 0;
    background: none;
    font: inherit;
}
.cell {
    height: 16px;
    margin-right: 2px;
    padding-left: 1px;
    border: 1px solid;
    border-color: #848484 #fff #fff #848484;
    white-space: nowrap;
}
.state { width: 80px; }
.coords { width: 232px; }
.snap { width: 54px; }
.snapmode {
    width: 53px;
    margin-left: 1px;
    border: 2px solid #404040;
    border-color: #404040 #d6d6ce #d6d6ce #404040;
}
.snapmode select {
    padding-left: 1px;
}
```
